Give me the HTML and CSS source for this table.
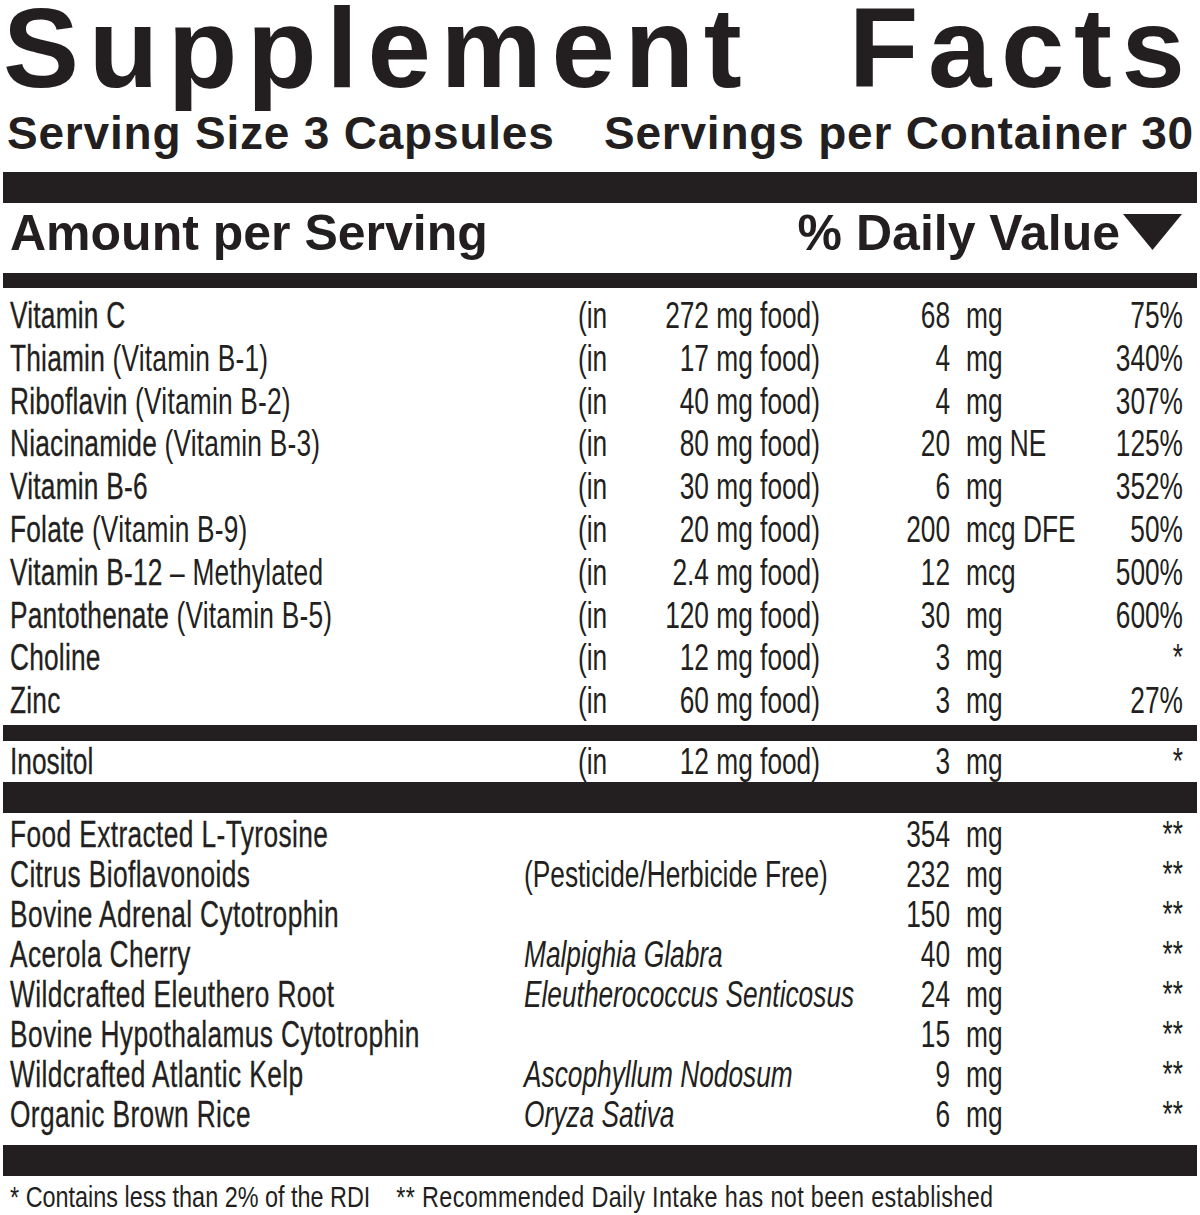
FILE: index.html
```html
<!DOCTYPE html>
<html lang="en">
<head>
<meta charset="utf-8">
<title>Supplement Facts</title>
<link rel="stylesheet" href="styles.css">
</head>
<body>
<div class="label">
  <h1 class="title">Supplement Facts</h1>
  <div class="serving"><span>Serving Size 3 Capsules</span><span>Servings per Container 30</span></div>
  <div class="bar bar-thick"></div>
  <div class="head">
    <span>Amount per Serving</span>
    <span class="dv-head">% Daily Value<svg class="tri" width="59" height="36" viewBox="0 0 59 36"><polygon points="0,0 59,0 29.5,36" fill="#231f20"/></svg></span>
  </div>
  <div class="bar bar-mid"></div>

  <div class="rows vit">
    <div class="row"><span class="name">Vitamin C</span><span class="in">(in</span><span class="food">272 mg food)</span><span class="amt">68</span><span class="unit">mg</span><span class="dv">75%</span></div>
    <div class="row"><span class="name">Thiamin <span class="sub">(Vitamin B-1)</span></span><span class="in">(in</span><span class="food">17 mg food)</span><span class="amt">4</span><span class="unit">mg</span><span class="dv">340%</span></div>
    <div class="row"><span class="name">Riboflavin <span class="sub">(Vitamin B-2)</span></span><span class="in">(in</span><span class="food">40 mg food)</span><span class="amt">4</span><span class="unit">mg</span><span class="dv">307%</span></div>
    <div class="row"><span class="name">Niacinamide <span class="sub">(Vitamin B-3)</span></span><span class="in">(in</span><span class="food">80 mg food)</span><span class="amt">20</span><span class="unit">mg NE</span><span class="dv">125%</span></div>
    <div class="row"><span class="name">Vitamin B-6</span><span class="in">(in</span><span class="food">30 mg food)</span><span class="amt">6</span><span class="unit">mg</span><span class="dv">352%</span></div>
    <div class="row"><span class="name">Folate <span class="sub">(Vitamin B-9)</span></span><span class="in">(in</span><span class="food">20 mg food)</span><span class="amt">200</span><span class="unit">mcg DFE</span><span class="dv">50%</span></div>
    <div class="row"><span class="name">Vitamin B-12 <span class="sub">– Methylated</span></span><span class="in">(in</span><span class="food">2.4 mg food)</span><span class="amt">12</span><span class="unit">mcg</span><span class="dv">500%</span></div>
    <div class="row"><span class="name">Pantothenate <span class="sub">(Vitamin B-5)</span></span><span class="in">(in</span><span class="food">120 mg food)</span><span class="amt">30</span><span class="unit">mg</span><span class="dv">600%</span></div>
    <div class="row"><span class="name">Choline</span><span class="in">(in</span><span class="food">12 mg food)</span><span class="amt">3</span><span class="unit">mg</span><span class="dv">*</span></div>
    <div class="row"><span class="name">Zinc</span><span class="in">(in</span><span class="food">60 mg food)</span><span class="amt">3</span><span class="unit">mg</span><span class="dv">27%</span></div>
  </div>
  <div class="bar bar-thin"></div>
  <div class="rows ino">
    <div class="row"><span class="name">Inositol</span><span class="in">(in</span><span class="food">12 mg food)</span><span class="amt">3</span><span class="unit">mg</span><span class="dv">*</span></div>
  </div>
  <div class="bar bar-thick"></div>

  <div class="rows herbs">
    <div class="row"><span class="name">Food Extracted L-Tyrosine</span><span class="src"></span><span class="amt">354</span><span class="unit">mg</span><span class="dv">**</span></div>
    <div class="row"><span class="name">Citrus Bioflavonoids</span><span class="src">(Pesticide/Herbicide Free)</span><span class="amt">232</span><span class="unit">mg</span><span class="dv">**</span></div>
    <div class="row"><span class="name">Bovine Adrenal Cytotrophin</span><span class="src"></span><span class="amt">150</span><span class="unit">mg</span><span class="dv">**</span></div>
    <div class="row"><span class="name">Acerola Cherry</span><span class="src latin">Malpighia Glabra</span><span class="amt">40</span><span class="unit">mg</span><span class="dv">**</span></div>
    <div class="row"><span class="name">Wildcrafted Eleuthero Root</span><span class="src latin">Eleutherococcus Senticosus</span><span class="amt">24</span><span class="unit">mg</span><span class="dv">**</span></div>
    <div class="row"><span class="name">Bovine Hypothalamus Cytotrophin</span><span class="src"></span><span class="amt">15</span><span class="unit">mg</span><span class="dv">**</span></div>
    <div class="row"><span class="name">Wildcrafted Atlantic Kelp</span><span class="src latin">Ascophyllum Nodosum</span><span class="amt">9</span><span class="unit">mg</span><span class="dv">**</span></div>
    <div class="row"><span class="name">Organic Brown Rice</span><span class="src latin">Oryza Sativa</span><span class="amt">6</span><span class="unit">mg</span><span class="dv">**</span></div>
  </div>
  <div class="bar bar-thick"></div>
  <p class="foot"><span>* Contains less than 2% of the RDI</span><span class="foot-note">** Recommended Daily Intake has not been established</span></p>
</div>
</body>
</html>
```

FILE: styles.css
```css
html, body {
  margin: 0;
  padding: 0;
  background: #ffffff;
}

.label {
  padding: 0 3px;
  color: #231f20;
  font-family: "Liberation Sans", Arial, sans-serif;
  overflow: hidden;
}

.title {
  margin: 0;
  font-size: 114px;
  font-weight: 700;
  line-height: 96px;
  letter-spacing: 9.6px;
  word-spacing: 56px;
  white-space: nowrap;
}

.serving {
  display: flex;
  justify-content: space-between;
  padding: 0 3px 0 4px;
  margin-bottom: 2px;
  font-size: 46px;
  font-weight: 700;
  line-height: 74px;
  letter-spacing: 0.8px;
  white-space: nowrap;
}

.bar {
  background: #231f20;
}
.bar-thick { height: 31px; }
.bar-mid { height: 15px; }
.bar-thin { height: 16px; }

.head {
  display: flex;
  justify-content: space-between;
  align-items: baseline;
  padding: 0 15px 0 7px;
  margin-bottom: 9px;
  font-size: 50px;
  font-weight: 700;
  line-height: 61px;
  white-space: nowrap;
}

.tri {
  margin-left: 3px;
  vertical-align: baseline;
}

/* condensed body text: Liberation Sans compressed horizontally */
.rows {
  width: 1635.6px;
  transform: scaleX(0.73);
  transform-origin: 0 0;
  font-family: "Liberation Sans", Arial, sans-serif;
  font-size: 36px;
}

.row {
  display: grid;
  padding: 0 19.2px 0 9.6px;
  white-space: nowrap;
}

.vit { padding: 7px 0 2px; }
.vit .row { line-height: 42.8px; }
.ino .row { line-height: 41px; }

.vit .row, .ino .row {
  grid-template-columns: 778.1px 82.2px 249.3px 178.1px minmax(0, 1fr) 164.4px;
}
.vit .name { letter-spacing: 0.3px; }

.herbs { padding: 2.5px 0 10px; }
.herbs .row {
  line-height: 40px;
  grid-template-columns: 704.1px 460.3px 123.3px minmax(0, 1fr) 164.4px;
}
.herbs .name { letter-spacing: 0.55px; }

.name {
  -webkit-text-stroke: 0.3px #231f20;
}
.sub {
  -webkit-text-stroke: 0;
}

.food, .amt, .dv { text-align: right; }
.unit { padding-left: 21.9px; }
.latin { font-style: italic; }

.foot {
  display: flex;
  gap: 33.3px;
  width: 1530.8px;
  margin: 4px 0 0;
  padding-left: 9px;
  box-sizing: border-box;
  transform: scaleX(0.78);
  transform-origin: 0 0;
  font-size: 30px;
  line-height: 34px;
  white-space: nowrap;
}
.foot-note { letter-spacing: 0.45px; }
```
